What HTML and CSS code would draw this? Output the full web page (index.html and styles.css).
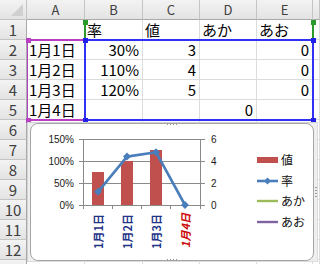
FILE: index.html
```html
<!DOCTYPE html>
<html lang="ja">
<head>
    <meta charset="UTF-8">
    <meta name="viewport" content="width=device-width, initial-scale=1.0">
    <title>Sheet1</title>
    <link rel="stylesheet" href="styles.css">
</head>
<body>
    <div class="sheet">
        <div class="head corner"></div>
        <div class="head col">A</div>
        <div class="head col">B</div>
        <div class="head col">C</div>
        <div class="head col">D</div>
        <div class="head col">E</div>
        <div class="head col"></div>

        <div class="head row">1</div>
        <div></div>
        <div>率</div>
        <div>値</div>
        <div>あか</div>
        <div>あお</div>
        <div></div>

        <div class="head row">2</div>
        <div>1月1日</div>
        <div class="num">30%</div>
        <div class="num">3</div>
        <div></div>
        <div class="num">0</div>
        <div></div>

        <div class="head row">3</div>
        <div>1月2日</div>
        <div class="num">110%</div>
        <div class="num">4</div>
        <div></div>
        <div class="num">0</div>
        <div></div>

        <div class="head row">4</div>
        <div>1月3日</div>
        <div class="num">120%</div>
        <div class="num">5</div>
        <div></div>
        <div class="num">0</div>
        <div></div>

        <div class="head row">5</div>
        <div>1月4日</div>
        <div></div>
        <div></div>
        <div class="num">0</div>
        <div></div>
        <div></div>

        <div class="head row">6</div><div></div><div></div><div></div><div></div><div></div><div></div>
        <div class="head row">7</div><div></div><div></div><div></div><div></div><div></div><div></div>
        <div class="head row">8</div><div></div><div></div><div></div><div></div><div></div><div></div>
        <div class="head row">9</div><div></div><div></div><div></div><div></div><div></div><div></div>
        <div class="head row">10</div><div></div><div></div><div></div><div></div><div></div><div></div>
        <div class="head row">11</div><div></div><div></div><div></div><div></div><div></div><div></div>
        <div class="head row">12</div><div></div><div></div><div></div><div></div><div></div><div></div>
        <div class="head row">13</div><div></div><div></div><div></div><div></div><div></div><div></div>

        <!-- range highlights for the chart source -->
        <span class="range range-cat"></span>
        <span class="range range-val"></span>
        <span class="range-name name-left"></span>
        <span class="range-name name-right"></span>
        <span class="knob knob-purple" style="left:26px;top:38px"></span>
        <span class="knob knob-purple" style="left:26px;top:118px"></span>
        <span class="knob knob-blue" style="left:83px;top:38px"></span>
        <span class="knob knob-blue" style="left:83px;top:118px"></span>
        <span class="knob knob-blue" style="left:311px;top:38px"></span>
        <span class="knob knob-blue" style="left:311px;top:118px"></span>
        <span class="knob knob-green" style="left:83px;top:20px"></span>
        <span class="knob knob-green" style="left:311px;top:20px"></span>

        <div class="chart">
            <div class="chart-inner"></div>
            <svg class="plot" width="291" height="140" viewBox="27 122 291 140">
                <g fill="#9a9a9a">
                    <rect x="167" y="123" width="1" height="2"/>
                    <rect x="170" y="123" width="1" height="2"/>
                    <rect x="173" y="123" width="1" height="2"/>
                    <rect x="176" y="123" width="1" height="2"/>
                    <rect x="167" y="259" width="1" height="2"/>
                    <rect x="170" y="259" width="1" height="2"/>
                    <rect x="173" y="259" width="1" height="2"/>
                    <rect x="176" y="259" width="1" height="2"/>
                    <rect x="315" y="187" width="2" height="1"/>
                    <rect x="315" y="190" width="2" height="1"/>
                    <rect x="315" y="193" width="2" height="1"/>
                    <rect x="315" y="196" width="2" height="1"/>
                </g>

                <g stroke="#8a8a8a" stroke-width="1">
                    <line x1="83" y1="139.5" x2="201" y2="139.5"/>
                    <line x1="83" y1="161.5" x2="201" y2="161.5"/>
                    <line x1="83" y1="183.5" x2="201" y2="183.5"/>
                    <line x1="79" y1="139.5" x2="83" y2="139.5"/>
                    <line x1="79" y1="161.5" x2="83" y2="161.5"/>
                    <line x1="79" y1="183.5" x2="83" y2="183.5"/>
                    <line x1="79" y1="205.5" x2="205" y2="205.5"/>
                    <line x1="201" y1="139.5" x2="205" y2="139.5"/>
                    <line x1="201" y1="161.5" x2="205" y2="161.5"/>
                    <line x1="201" y1="183.5" x2="205" y2="183.5"/>
                    <line x1="83.5" y1="139" x2="83.5" y2="209"/>
                    <line x1="200.5" y1="139" x2="200.5" y2="209"/>
                    <line x1="112.5" y1="205" x2="112.5" y2="209"/>
                    <line x1="141.5" y1="205" x2="141.5" y2="209"/>
                    <line x1="170.5" y1="205" x2="170.5" y2="209"/>
                </g>

                <g fill="#c0504d">
                    <rect x="92" y="172" width="12" height="33"/>
                    <rect x="121" y="161" width="12" height="44"/>
                    <rect x="150" y="150" width="12" height="55"/>
                </g>

                <polyline points="98,191.8 127,156.6 156,152.2 185,205" fill="none" stroke="#4a7ebb" stroke-width="2.6" stroke-linejoin="round"/>
                <g fill="#4a7ebb">
                    <polygon points="98,187.8 102,191.8 98,195.8 94,191.8"/>
                    <polygon points="127,152.6 131,156.6 127,160.6 123,156.6"/>
                    <polygon points="156,148.2 160,152.2 156,156.2 152,152.2"/>
                    <polygon points="185,201 189,205 185,209 181,205"/>
                </g>

                <g class="axis-label" text-anchor="end">
                    <text x="74" y="142.5">150%</text>
                    <text x="74" y="164.5">100%</text>
                    <text x="74" y="186.5">50%</text>
                    <text x="74" y="208.5">0%</text>
                </g>
                <g class="axis-label">
                    <text x="211" y="142.5">6</text>
                    <text x="211" y="164.5">4</text>
                    <text x="211" y="186.5">2</text>
                    <text x="211" y="208.5">0</text>
                </g>

                <text class="cat" transform="translate(102.5,249) rotate(-90)">1月1日</text>
                <text class="cat" transform="translate(131.5,249) rotate(-90)">1月2日</text>
                <text class="cat" transform="translate(160.5,249) rotate(-90)">1月3日</text>
                <text class="cat cat-off" transform="translate(189.5,248) rotate(-90)">1月4日</text>

                <rect x="257" y="157" width="21" height="6" fill="#c0504d"/>
                <line x1="257" y1="181" x2="278" y2="181" stroke="#4a7ebb" stroke-width="2.6"/>
                <polygon points="267.5,177.5 271,181 267.5,184.5 264,181" fill="#4a7ebb"/>
                <line x1="257" y1="201" x2="278" y2="201" stroke="#9bbb59" stroke-width="2.4"/>
                <line x1="257" y1="222" x2="278" y2="222" stroke="#8064a2" stroke-width="2.4"/>
                <g class="legend">
                    <text x="281" y="164.5">値</text>
                    <text x="281" y="185.5">率</text>
                    <text x="281" y="205.5">あか</text>
                    <text x="281" y="226.5">あお</text>
                </g>
            </svg>
        </div>
    </div>
</body>
</html>
```

FILE: styles.css
```css
body {
    margin: 0;
    overflow: hidden;
    background: #fff;
}
.sheet {
    position: relative;
    display: grid;
    grid-template-columns: 27px 58px 58px 57px 57px 56px 7px;
    grid-template-rows: repeat(14, 20px);
    font-family: "Noto Sans CJK JP", sans-serif;
    color: #000;
}
.sheet > div {
    box-sizing: border-box;
    border-right: 1px solid #dadcdd;
    border-bottom: 1px solid #dadcdd;
    padding: 0 3px 0 2px;
    font-size: 15px;
    line-height: 19px;
    white-space: nowrap;
    overflow: hidden;
}
.sheet > .head {
    background: linear-gradient(#f3f3f3, #e3e3e3);
    border-color: #c4c4c4;
    color: #404040;
    text-align: center;
    padding: 0;
}
.sheet > .col {
    font-size: 13px;
    border-bottom-color: #a9a9a9;
}
.sheet > .row {
    font-size: 15px;
    border-right-color: #a9a9a9;
}
.sheet > .corner {
    position: relative;
}
.corner::after {
    content: "";
    position: absolute;
    right: 3px;
    bottom: 3px;
    border-left: 12px solid transparent;
    border-bottom: 12px solid #d0d0d0;
}
.sheet > .num {
    text-align: right;
}
.range {
    position: absolute;
    box-sizing: border-box;
}
.range-cat {
    left: 27px;
    top: 39px;
    width: 59px;
    height: 82px;
    border: 2px solid #b83fc4;
    border-right: none;
    border-left-width: 1px;
}
.range-val {
    left: 84px;
    top: 39px;
    width: 230px;
    height: 82px;
    border: 2px solid #3131f5;
}
.range-name {
    position: absolute;
    top: 21px;
    width: 2px;
    height: 19px;
    background: #2a9a2a;
}
.name-left {
    left: 84px;
}
.name-right {
    left: 312px;
}
.knob {
    position: absolute;
    width: 5px;
    height: 5px;
}
.knob-purple {
    background: #b83fc4;
}
.knob-blue {
    background: #2020e8;
}
.knob-green {
    background: #2a9a2a;
}
.chart {
    position: absolute;
    left: 27px;
    top: 122px;
    width: 291px;
    height: 140px;
    box-sizing: border-box;
    border: 1px solid #d2d2d2;
    background: #efefef;
    padding: 3px;
}
.chart-inner {
    height: 100%;
    box-sizing: border-box;
    background: #fff;
    border: 1px solid #a5a5a5;
    border-radius: 8px;
}
.plot {
    position: absolute;
    left: -1px;
    top: -1px;
}
.axis-label {
    font-family: "Liberation Sans", sans-serif;
    font-size: 10px;
    fill: #1a1a1a;
}
.cat {
    font-family: "Noto Sans CJK JP", sans-serif;
    font-size: 11px;
    font-weight: bold;
    fill: #1f3388;
}
.cat-off {
    fill: #cc0a0a;
    font-style: italic;
}
.legend {
    font-family: "Noto Sans CJK JP", sans-serif;
    font-size: 12px;
    fill: #111;
}
```
